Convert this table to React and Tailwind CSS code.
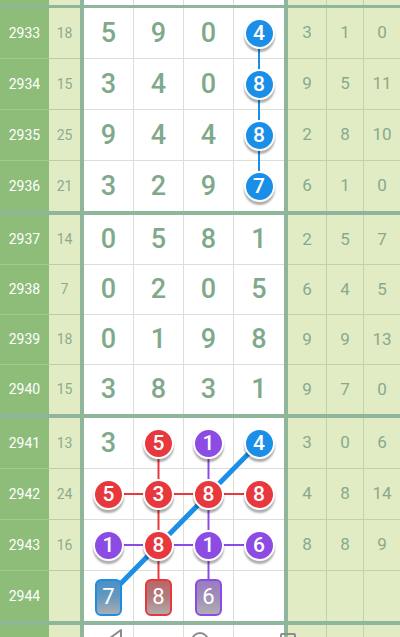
const BALL = {
  b: 'bg-[#1b8fe8]',
  r: 'bg-[#e6383d]',
  p: 'bg-[#8c4be2]',
};

const BOX = {
  b: 'border-[#1b8fe8] bg-linear-to-b from-[#4d8fc4] via-[#6699bd] to-[#a8adb1]',
  r: 'border-[#e6383d] bg-linear-to-b from-[#b9666a] via-[#b27c7e] to-[#b0aaab]',
  p: 'border-[#8c4be2] bg-linear-to-b from-[#9a7cc0] via-[#a08fb6] to-[#b0adb4]',
};

const G1 = [
  { n: 2933, s: 18, d: [5, 9, 0, { v: 4, c: 'b' }], t: [3, 1, 0] },
  { n: 2934, s: 15, d: [3, 4, 0, { v: 8, c: 'b' }], t: [9, 5, 11] },
  { n: 2935, s: 25, d: [9, 4, 4, { v: 8, c: 'b' }], t: [2, 8, 10] },
  { n: 2936, s: 21, d: [3, 2, 9, { v: 7, c: 'b' }], t: [6, 1, 0] },
];

const G2 = [
  { n: 2937, s: 14, d: [0, 5, 8, 1], t: [2, 5, 7] },
  { n: 2938, s: 7, d: [0, 2, 0, 5], t: [6, 4, 5] },
  { n: 2939, s: 18, d: [0, 1, 9, 8], t: [9, 9, 13] },
  { n: 2940, s: 15, d: [3, 8, 3, 1], t: [9, 7, 0] },
];

const G3 = [
  { n: 2941, s: 13, d: [3, { v: 5, c: 'r' }, { v: 1, c: 'p' }, { v: 4, c: 'b' }], t: [3, 0, 6] },
  { n: 2942, s: 24, d: [{ v: 5, c: 'r' }, { v: 3, c: 'r' }, { v: 8, c: 'r' }, { v: 8, c: 'r' }], t: [4, 8, 14] },
  { n: 2943, s: 16, d: [{ v: 1, c: 'p' }, { v: 8, c: 'r' }, { v: 1, c: 'p' }, { v: 6, c: 'p' }], t: [8, 8, 9] },
  { n: 2944, s: '', d: [{ v: 7, c: 'b', box: true }, { v: 8, c: 'r', box: true }, { v: 6, c: 'p', box: true }, ''], t: ['', '', ''] },
];

const DIGIT_W = ['w-[50px] border-r', 'w-[50px] border-r', 'w-[50px] border-r', 'w-[50px]'];
const TAIL_W = ['w-[39px] border-r', 'w-[37px] border-r', 'w-[36px]'];

function Ball({ v, c }) {
  return (
    <div className={`relative z-10 flex h-[31px] w-[31px] items-center justify-center rounded-full border-2 border-white ${BALL[c]} text-[21px] font-medium leading-none text-white shadow-[0_3px_2px_rgba(0,0,0,0.32)]`}>
      {v}
    </div>
  );
}

function Box({ v, c }) {
  return (
    <div className={`relative z-10 mt-[2px] flex h-[37px] w-[27px] items-center justify-center rounded-[6px] border-2 ${BOX[c]} text-[22px] leading-none text-white`}>
      {v}
    </div>
  );
}

function Digit({ d }) {
  if (d === '') return null;
  if (typeof d === 'object') return d.box ? <Box {...d} /> : <Ball {...d} />;
  return <span className="text-[27px] font-medium text-[#7ea98b]">{d}</span>;
}

function Row({ r, h, last }) {
  const b = last ? '' : 'border-b';
  return (
    <div className={`flex ${h}`}>
      <div className={`flex w-[49px] items-center justify-center bg-[#8dbd79] text-[14px] text-white ${b} border-[#a2c991]`}>{r.n}</div>
      <div className={`flex w-[31px] items-center justify-center bg-[#e2ecc4] text-[14px] text-[#8aab91] ${b} border-[#b9cfa9]`}>{r.s}</div>
      <div className="w-[4px] bg-[#8fb59a]" />
      {r.d.map((d, i) => (
        <div key={i} className={`flex items-center justify-center bg-white ${DIGIT_W[i]} ${b} border-[#dadfda]`}>
          <Digit d={d} />
        </div>
      ))}
      <div className="w-[4px] bg-[#8fb59a]" />
      {r.t.map((t, i) => (
        <div key={i} className={`flex items-center justify-center bg-[#e2ecc4] text-[17px] text-[#88a98e] ${TAIL_W[i]} ${b} border-[#bdd2ae]`}>
          {t}
        </div>
      ))}
    </div>
  );
}

function Group({ rows, tall, children }) {
  return (
    <div className="relative">
      {rows.map((r, i) => {
        const last = i === rows.length - 1;
        const h = tall ? (last ? 'h-[50px]' : 'h-[51px]') : last ? 'h-[49px]' : 'h-[50px]';
        return <Row key={r.n} r={r} h={h} last={last} />;
      })}
      {children}
    </div>
  );
}

function Partial({ h }) {
  return (
    <div className={`flex ${h}`}>
      <div className="w-[49px] bg-[#8dbd79]" />
      <div className="w-[31px] bg-[#e2ecc4]" />
      <div className="w-[4px] bg-[#8fb59a]" />
      {DIGIT_W.map((w, i) => (
        <div key={i} className={`bg-white ${w} border-[#dadfda]`} />
      ))}
      <div className="w-[4px] bg-[#8fb59a]" />
      {TAIL_W.map((w, i) => (
        <div key={i} className={`bg-[#e2ecc4] ${w} border-[#bdd2ae]`} />
      ))}
    </div>
  );
}

const Thick = ({ h = 'h-[4px]' }) => <div className={`${h} bg-[#8fb59a]`} />;

export default function App() {
  const cx = [24.5, 74.5, 124.5, 175];
  const cy = [25, 76, 127, 178];
  return (
    <div className="relative h-[637px] w-[400px] overflow-hidden bg-white font-['Roboto','Liberation_Sans',sans-serif]">
      <Partial h="h-[5px]" />
      <Thick h="h-[3px]" />
      <Group rows={G1} tall>
        <svg className="absolute left-[84px] top-0 h-[203px] w-[200px]" viewBox="0 0 200 203">
          <line x1={cx[3]} y1={cy[0]} x2={cx[3]} y2={cy[3]} stroke="#1b8fe8" strokeWidth="2" />
        </svg>
      </Group>
      <Thick />
      <Group rows={G2} />
      <Thick />
      <Group rows={G3} tall>
        <svg className="absolute left-[84px] top-0 h-[203px] w-[200px]" viewBox="0 0 200 203">
          <line x1={cx[1]} y1={cy[0]} x2={cx[1]} y2={cy[3]} stroke="#e6383d" strokeWidth="2" />
          <line x1={cx[0]} y1={cy[1]} x2={cx[3]} y2={cy[1]} stroke="#e6383d" strokeWidth="2" />
          <line x1={cx[2]} y1={cy[0]} x2={cx[2]} y2={cy[3]} stroke="#8c4be2" strokeWidth="2" />
          <line x1={cx[0]} y1={cy[2]} x2={cx[3]} y2={cy[2]} stroke="#8c4be2" strokeWidth="2" />
          <line x1={cx[3]} y1={cy[0]} x2={cx[0]} y2={cy[3]} stroke="#1b8fe8" strokeWidth="5" />
        </svg>
      </Group>
      <Thick />
      <Partial h="h-[12px]" />
      <svg className="absolute left-0 top-[626px] h-[11px] w-[400px]" viewBox="0 0 400 11" fill="none" stroke="#8c8c8c" strokeWidth="2">
        <polygon points="121,4 110,12 121,20" strokeLinejoin="round" />
        <circle cx="200" cy="15" r="8" />
        <rect x="281" y="8" width="14" height="14" rx="1" />
      </svg>
    </div>
  );
}
